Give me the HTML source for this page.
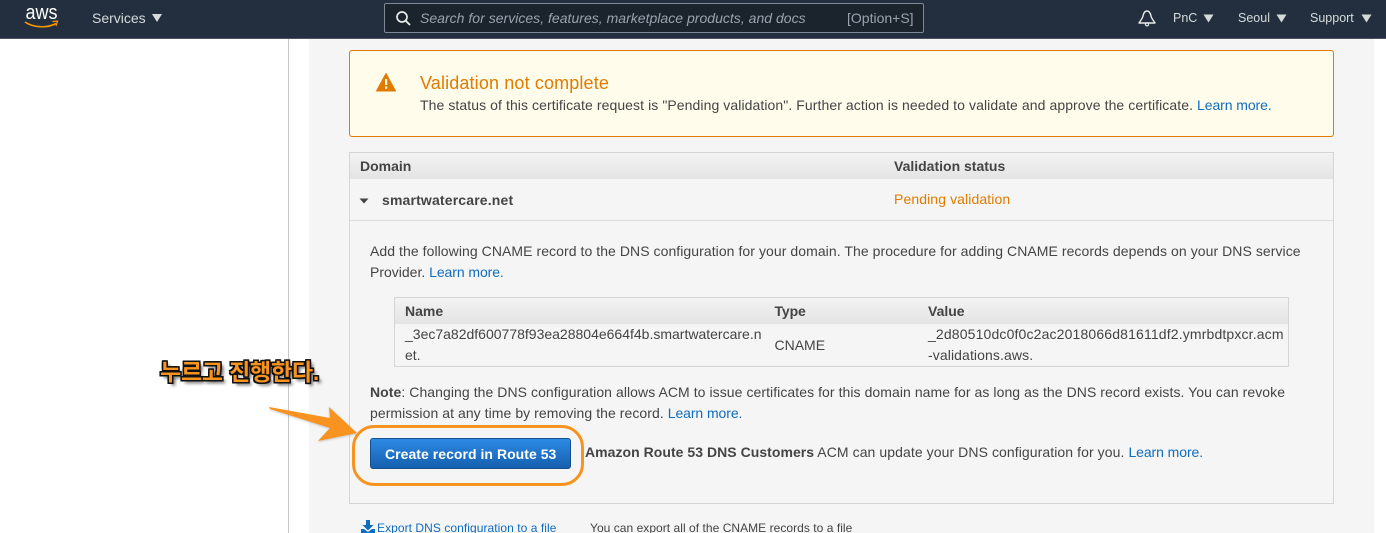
<!DOCTYPE html>
<html lang="en"><head><meta charset="utf-8"><title>ACM</title>
<style>
html,body{margin:0;padding:0;width:1386px;height:533px;overflow:hidden;background:#fff}
body{position:relative;font-family:"Liberation Sans","Noto Sans CJK KR",sans-serif;font-size:14px;color:#444}
.a{position:absolute;white-space:nowrap;line-height:20px}
.box{position:absolute;box-sizing:border-box}
a{color:#0f6cbf;text-decoration:none;letter-spacing:-.08px}
.n{color:#d5dbdb}
b{font-weight:700}
</style></head><body>
<div class="box" style="left:288px;top:39px;width:1px;height:494px;background:#c8c8c8"></div>
<div class="box" style="left:309px;top:39px;width:1065px;height:494px;background:#f5f5f5"></div>

<div class="box" style="left:0;top:0;width:1386px;height:39px;background:#232f3e;border-bottom:1px solid #4a5463"></div>
<div class="a" style="left:25.500px;top:1px;font-size:18px;color:#fff;line-height:24px;transform:scaleY(1.150);transform-origin:0 18px">aws</div>
<svg class="box" style="left:24px;top:20px" width="35" height="10" viewBox="0 0 35 10"><path d="M1 2C9 7.500 23 8.500 32 3.500" fill="none" stroke="#f90" stroke-width="1.600"/><path d="M28.500 1.500L33.500 1.200L32 6" fill="none" stroke="#f90" stroke-width="1.200"/></svg>
<div class="a n" style="left:92px;top:8px">Services</div>
<svg class="box" style="left:151px;top:13px" width="12" height="10"><path d="M1 1H11L6 9Z" fill="#d5dbdb"/></svg>

<div class="box" style="left:384px;top:3px;width:540px;height:30px;background:#1b232d;border:1px solid #7d8998;border-radius:2px"></div>
<svg class="box" style="left:395px;top:10px" width="17" height="17" viewBox="0 0 17 17"><circle cx="7" cy="7" r="5" fill="none" stroke="#e8eaea" stroke-width="1.700"/><path d="M10.800 10.800L15 15" stroke="#e8eaea" stroke-width="1.900"/></svg>
<div class="a" style="left:420px;top:8px;color:#9aa3ad;font-style:italic;letter-spacing:.02px">Search for services, features, marketplace products, and docs</div>
<div class="a" style="left:847px;top:8px;color:#9aa3ad">[Option+S]</div>

<svg class="box" style="left:1138px;top:9px" width="18" height="18" viewBox="0 0 18 18"><path d="M9 2C6.500 2 5.500 4.500 5 7C4.500 9.500 2.500 11.500 1 14H17C15.500 11.500 13.500 9.500 13 7C12.500 4.500 11.500 2 9 2Z" fill="none" stroke="#e8eaea" stroke-width="1.400" stroke-linejoin="round"/><circle cx="9" cy="15.300" r="1.600" fill="none" stroke="#e8eaea" stroke-width="1.200"/></svg>
<div class="a n" style="left:1173px;top:8px;font-size:12.500px">PnC</div>
<svg class="box" style="left:1203px;top:14px" width="11" height="9"><path d="M.5 .5H10.500L5.500 8.500Z" fill="#d5dbdb"/></svg>
<div class="a n" style="left:1238px;top:8px;font-size:12.500px">Seoul</div>
<svg class="box" style="left:1276px;top:14px" width="11" height="9"><path d="M.5 .5H10.500L5.500 8.500Z" fill="#d5dbdb"/></svg>
<div class="a n" style="left:1310px;top:8px;font-size:12.500px">Support</div>
<svg class="box" style="left:1361px;top:14px" width="11" height="9"><path d="M.5 .5H10.500L5.500 8.500Z" fill="#d5dbdb"/></svg>

<div class="box" style="left:349px;top:50px;width:985px;height:87px;background:#fffcec;border:1px solid #e07b00;border-radius:3px"></div>
<svg class="box" style="left:375px;top:72px" width="22" height="20" viewBox="0 0 22 20"><path d="M11 1.500L20.500 19H1.500Z" fill="#e07b00" stroke="#e07b00" stroke-width="1" stroke-linejoin="round"/><rect x="10" y="7" width="2.200" height="6" fill="#fffcec"/><rect x="10" y="14.500" width="2.200" height="2.200" fill="#fffcec"/></svg>
<div class="a" style="left:420px;top:73px;font-size:18px;color:#e07b00;letter-spacing:.14px">Validation not complete</div>
<div class="a" style="left:420px;top:95px;letter-spacing:.082px">The status of this certificate request is "Pending validation". Further action is needed to validate and approve the certificate. <a>Learn more.</a></div>

<div class="box" style="left:349px;top:152px;width:985px;height:352px;border:1px solid #d5d5d5;background:#f5f5f5"></div>
<div class="box" style="left:350px;top:153px;width:983px;height:26px;background:linear-gradient(#f3f3f3,#e4e4e4)"></div>
<div class="a" style="left:360px;top:156px"><b>Domain</b></div>
<div class="a" style="left:894px;top:156px"><b>Validation status</b></div>
<svg class="box" style="left:359px;top:198px" width="11" height="7"><path d="M.5 .5H9.500L5 5.500Z" fill="#444"/></svg>
<div class="a" style="left:382px;top:190px;letter-spacing:.16px"><b>smartwatercare.net</b></div>
<div class="a" style="left:894px;top:189px;color:#e07b00;letter-spacing:.1px">Pending validation</div>
<div class="box" style="left:350px;top:220px;width:983px;height:1px;background:#dcdcdc"></div>

<div class="a" style="left:370px;top:241px;letter-spacing:.063px">Add the following CNAME record to the DNS configuration for your domain. The procedure for adding CNAME records depends on your DNS service</div>
<div class="a" style="left:370px;top:262px">Provider. <a>Learn more.</a></div>

<div class="box" style="left:394px;top:297px;width:895px;height:70px;border:1px solid #d5d5d5"></div>
<div class="box" style="left:395px;top:298px;width:893px;height:26px;background:linear-gradient(#f3f3f3,#e4e4e4)"></div>
<div class="a" style="left:405px;top:301px"><b>Name</b></div>
<div class="a" style="left:774.500px;top:301px;letter-spacing:-.1px"><b>Type</b></div>
<div class="a" style="left:928px;top:301px"><b>Value</b></div>
<div class="a" style="left:405px;top:324px">_3ec7a82df600778f93ea28804e664f4b.smartwatercare.n</div>
<div class="a" style="left:405px;top:345px">et.</div>
<div class="a" style="left:774.500px;top:335px">CNAME</div>
<div class="a" style="left:928px;top:324px;letter-spacing:.15px">_2d80510dc0f0c2ac2018066d81611df2.ymrbdtpxcr.acm</div>
<div class="a" style="left:928px;top:345px;letter-spacing:.1px">-validations.aws.</div>

<div class="a" style="left:370px;top:382px;letter-spacing:.065px"><b>Note</b>: Changing the DNS configuration allows ACM to issue certificates for this domain name for as long as the DNS record exists. You can revoke</div>
<div class="a" style="left:370px;top:403px;letter-spacing:.06px">permission at any time by removing the record. <a>Learn more.</a></div>

<div class="box" style="left:370px;top:438px;width:201px;height:31px;border:1px solid #14508c;border-radius:3px;background:linear-gradient(#2d8ae5,#155fae)"></div>
<div class="a" style="left:385px;top:444px;color:#fff;letter-spacing:.04px"><b>Create record in Route 53</b></div>
<div class="box" style="left:352px;top:425px;width:232px;height:61px;border:3px solid #f7931e;border-radius:22px"></div>
<div class="a" style="left:585px;top:442px;letter-spacing:.08px"><b style="letter-spacing:.04px">Amazon Route 53 DNS Customers</b> ACM can update your DNS configuration for you. <a>Learn more.</a></div>

<svg class="box" style="left:265px;top:402px;filter:drop-shadow(0 1px 1px rgba(0,0,0,.2))" width="100" height="45" viewBox="0 0 100 45"><path d="M4 5L65 16L64 5L92 31L53 39L65 26L5 7Z" fill="#f7931e"/></svg>
<div class="a" style="left:160px;top:360px;font-size:23px;line-height:24px;font-weight:700;color:#f7931e;letter-spacing:-.2px;text-shadow:-1.500px 0 #111,1.500px 0 #111,0 -1.500px #111,0 1.500px #111,1.500px 1.500px #111,-1.500px -1.500px #111,1.500px -1.500px #111,-1.500px 1.500px #111,3px 3px 3px #555">누르고 진행한다.</div>

<svg class="box" style="left:361px;top:520px" width="15" height="13" viewBox="0 0 15 13"><path d="M5 0H9V5H12.500L7 10.500L1.500 5H5Z" fill="#0f6cbf"/><path d="M0 9H3L7 12L11 9H14V13H0Z" fill="#0f6cbf"/></svg>
<div class="a" style="left:377px;top:518px;font-size:12px"><a style="letter-spacing:.06px">Export DNS configuration to a file</a></div>
<div class="a" style="left:590px;top:518px;font-size:12px;letter-spacing:.04px">You can export all of the CNAME records to a file</div>
</body></html>
